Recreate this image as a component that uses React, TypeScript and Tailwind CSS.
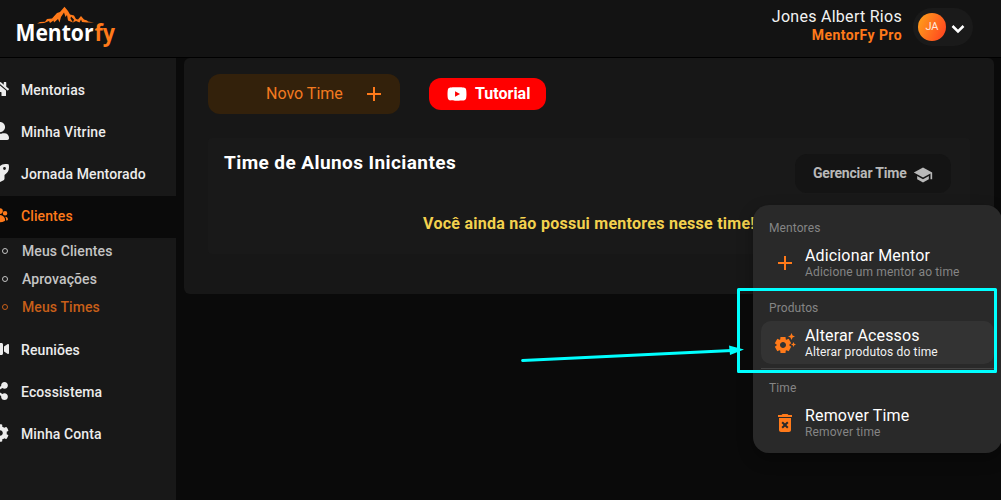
import React from "react";
import { FaHome, FaUserAlt, FaRocket, FaVideo, FaShareAlt, FaCog } from "react-icons/fa";
import { FaYoutube } from "react-icons/fa6";
import { HiUserGroup } from "react-icons/hi2";
import { MdAdd, MdSchool, MdSettingsSuggest, MdDeleteForever } from "react-icons/md";
import type { IconType } from "react-icons";

function Logo() {
  return (
    <svg width="104" height="48" viewBox="0 0 104 48" className="shrink-0">
      <path
        d="M22 18.500L25 17L30 16.800L32 14L37 13.500L42 8L45 7L49.500 1.800L53 6L55 9.500L59 10.500L61 14L63 14.500L66 11L69 14.500L72 15.500L73 16.500L79 17.500L72 17.600L67 17L66 14.500L64.500 17.500L61 16L58 17.500L59 14.500L56 11.500L55.500 13.500L58 17.500L53 15.500L52 10L50.500 12L49 7.500L46 12L44.500 17.500L43 14L39 17.500L38.500 15.500L35 18L34 16L29 18Z"
        fill="#ff7a1a"
      />
      <text x="0.500" y="36" textLength="78" lengthAdjust="spacingAndGlyphs" fontFamily="Open Sans, sans-serif" fontWeight="700" fontSize="24" fill="#fff">Mentor</text>
      <text x="79.500" y="36" textLength="20.500" lengthAdjust="spacingAndGlyphs" fontFamily="Open Sans, sans-serif" fontWeight="700" fontSize="24" fill="#ff7a1a">fy</text>
    </svg>
  );
}

function NavItem({ icon: Icon, label, active = false }: { icon: IconType; label: string; active?: boolean }) {
  return (
    <div className={`flex h-[42px] items-center ${active ? "bg-[#0a0a0a] text-[#ff7a1a]" : "text-[#ececec]"}`}>
      <span className="-ml-[9px] mr-3 flex w-[18px] shrink-0 justify-center pb-1">
        <Icon size={18} />
      </span>
      <span className="whitespace-nowrap pb-[2px] text-[14px] font-medium leading-5 tracking-[0.1px]">{label}</span>
    </div>
  );
}

function SubItem({ label, active = false }: { label: string; active?: boolean }) {
  return (
    <div className={`flex h-7 items-center ${active ? "text-[#c85f18]" : "text-[#c4c4c4]"}`}>
      <span className="ml-[2px] mr-[14px] size-[6px] shrink-0 rounded-full border border-current" />
      <span className="whitespace-nowrap text-[14px] font-medium leading-5 tracking-[0.1px]">{label}</span>
    </div>
  );
}

function MenuEntry({ icon: Icon, title, text, selected = false }: { icon: IconType; title: string; text: string; selected?: boolean }) {
  return (
    <div className={`mx-2 flex h-[43px] items-center rounded-[10px] pl-3 ${selected ? "bg-[#333333]" : ""}`}>
      <Icon size={24} className="mr-2 shrink-0 text-[#ff7a1a]" />
      <div className="flex flex-col whitespace-nowrap">
        <span className="text-[16px] leading-[18px] tracking-[0.15px] text-white">{title}</span>
        <span className={`text-[12px] leading-[14px] tracking-[0.14px] ${selected ? "text-[#f2f2f2]" : "text-[#858585]"}`}>{text}</span>
      </div>
    </div>
  );
}

export default function App() {
  return (
    <div className="relative flex h-[500px] w-[1001px] flex-col overflow-hidden bg-[#0a0a0a] font-['Roboto',sans-serif]">
      <header className="flex h-[58px] shrink-0 items-start justify-between border-b border-black bg-[#131313] pl-[15px] pr-7">
        <div className="pt-[5px]"><Logo /></div>
        <div className="flex items-start">
          <div className="pt-[7px] text-right">
            <div className="text-[16px] leading-[19px] tracking-[0.28px] text-[#f2f2f2]">Jones Albert Rios</div>
            <div className="text-[14px] font-bold leading-[18px] tracking-[0.42px] text-[#ff7a1a]">MentorFy Pro</div>
          </div>
          <div className="ml-[11px] mt-2 flex h-[38px] w-[60px] items-center rounded-[19px] bg-[#1a1a1a] pl-[5px]">
            <div className="flex size-7 items-center justify-center rounded-full bg-[linear-gradient(115deg,#ffa41b,#ff3d20)] text-[11px] text-[#ffe8dc]">JA</div>
            <svg width="14" height="10" viewBox="0 0 14 10" className="ml-[5px] mt-1" fill="none" stroke="#fff" strokeWidth="2.500">
              <path d="M1.500 2L7 7.500L12.500 2" />
            </svg>
          </div>
        </div>
      </header>

      <div className="flex min-h-0 flex-1 items-start">
        <aside className="h-full w-[176px] shrink-0 overflow-hidden bg-[#181818] pt-3">
          <NavItem icon={FaHome} label="Mentorias" />
          <NavItem icon={FaUserAlt} label="Minha Vitrine" />
          <NavItem icon={FaRocket} label="Jornada Mentorado" />
          <NavItem icon={HiUserGroup} label="Clientes" active />
          <div className="-mt-px pb-[9px]">
            <SubItem label="Meus Clientes" />
            <SubItem label="Aprovações" />
            <SubItem label="Meus Times" active />
          </div>
          <NavItem icon={FaVideo} label="Reuniões" />
          <NavItem icon={FaShareAlt} label="Ecossistema" />
          <NavItem icon={FaCog} label="Minha Conta" />
        </aside>

        <main className="ml-2 h-[236px] w-[810px] rounded-md bg-[#171717] px-6 pt-4">
          <div className="flex items-center">
            <button className="flex h-10 w-48 items-center rounded-xl bg-[#33210b] pl-[58px] text-[16px] text-[#f47a20]">
              <span className="w-[96px] text-left">Novo Time</span>
              <MdAdd size={24} className="text-[#ff7a1a]" />
            </button>
            <button className="ml-[29px] flex h-8 w-[117px] items-center rounded-xl bg-[#ff0000] pl-[18px] text-[16px] font-bold text-white">
              <FaYoutube size={20} className="mr-2" />
              Tutorial
            </button>
          </div>
          <section className="mt-6 h-[116px] rounded bg-[#191919] px-4">
            <div className="flex items-start justify-between">
              <h2 className="pt-[13px] text-[19px] font-bold leading-6 tracking-[0.42px] text-white">Time de Alunos Iniciantes</h2>
              <button className="mr-[3px] mt-4 flex h-[39px] w-[156px] items-center rounded-xl bg-[#141414] pl-[18px] text-[14px] font-bold text-[#b8b8b8]">
                <span className="w-[100px] text-left tracking-[-0.2px]">Gerenciar Time</span>
                <MdSchool size={20} className="mt-[2px]" />
              </button>
            </div>
            <p className="pt-[19px] text-center text-[16px] font-bold leading-6 tracking-[0.26px] text-[#f3d14e]">Você ainda não possui mentores nesse time!</p>
          </section>
        </main>
      </div>

      <div className="absolute left-[753px] top-[205px] flex h-[248px] w-[249px] flex-col rounded-2xl bg-[#292929] shadow-[0_6px_16px_rgba(0,0,0,0.3)]">
        <div className="px-4 pt-[13px] text-[12px] leading-5 tracking-[0.1px] text-[#858585]">Mentores</div>
        <div className="pt-[3px]"><MenuEntry icon={MdAdd} title="Adicionar Mentor" text="Adicione um mentor ao time" /></div>
        <div className="px-4 pt-[14px] text-[12px] leading-5 tracking-[0.1px] text-[#858585]">Produtos</div>
        <div className="pt-[3px]"><MenuEntry icon={MdSettingsSuggest} title="Alterar Acessos" text="Alterar produtos do time" selected /></div>
        <div className="mx-2 mt-1 h-px bg-[#444444]" />
        <div className="px-4 pt-[9px] text-[12px] leading-5 tracking-[0.1px] text-[#858585]">Time</div>
        <div className="pt-[3px]"><MenuEntry icon={MdDeleteForever} title="Remover Time" text="Remover time" /></div>
      </div>

      <svg width="1001" height="500" viewBox="0 0 1001 500" className="pointer-events-none absolute left-0 top-0">
        <rect x="738.500" y="289.500" width="257" height="82" fill="none" stroke="#00ffff" strokeWidth="3" strokeLinejoin="round" />
        <path d="M522.500 360.500L732 350.500" stroke="#00ffff" strokeWidth="2.800" strokeLinecap="round" />
        <path d="M729 345.500L744 349.500L730 355Z" fill="#00ffff" />
      </svg>
    </div>
  );
}
